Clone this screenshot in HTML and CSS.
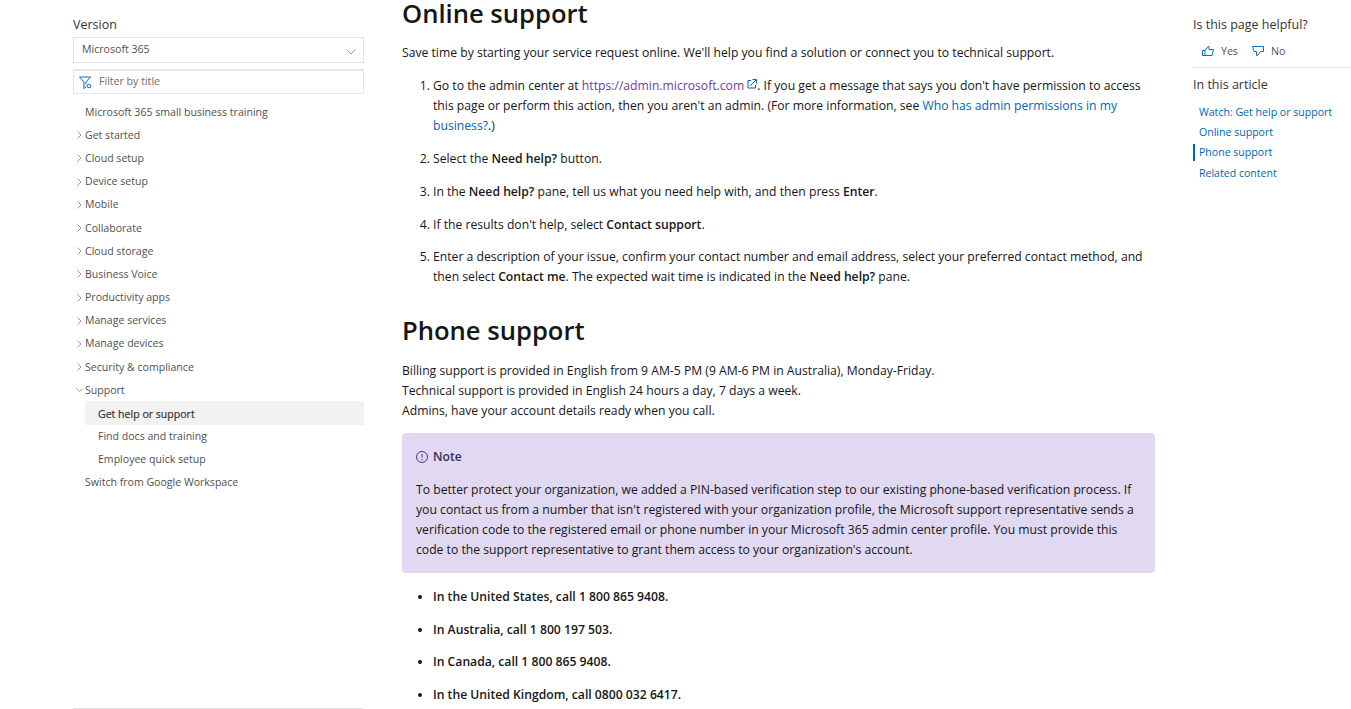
FILE: index.html
```html
<!DOCTYPE html>
<html lang="en">
<head>
<meta charset="utf-8">
<title>Get help or support</title>
<link rel="stylesheet" href="styles.css">
</head>
<body>
<div class="page">
  <aside class="sidebar">
    <div class="side-top">
      <div class="version-label">Version</div>
      <div class="version-select">
        <span>Microsoft 365</span>
        <svg class="select-chev" width="10" height="6" viewBox="0 0 10 6"><path d="M.5.5 5 5 9.500.5" fill="none" stroke="#999"/></svg>
      </div>
      <div class="filter">
        <svg class="filter-icon" width="13" height="13" viewBox="0 0 13 13" fill="none" stroke="#0f6cbd"><path d="M.5 1h11L7 6v2.500"/><path d="M.5 1 5 6v6.500l2-1.500"/><circle cx="10" cy="10" r="1.800"/></svg>
        <span>Filter by title</span>
      </div>
      <ul class="toc">
        <li class="toc-item"><span class="chev"></span>Microsoft 365 small business training</li>
        <li class="toc-item"><svg class="chev" width="5" height="8" viewBox="0 0 5 8"><path d="M.5.5 4 4 .5 7.500" fill="none" stroke="#999"/></svg>Get started</li>
        <li class="toc-item"><svg class="chev" width="5" height="8" viewBox="0 0 5 8"><path d="M.5.5 4 4 .5 7.500" fill="none" stroke="#999"/></svg>Cloud setup</li>
        <li class="toc-item"><svg class="chev" width="5" height="8" viewBox="0 0 5 8"><path d="M.5.5 4 4 .5 7.500" fill="none" stroke="#999"/></svg>Device setup</li>
        <li class="toc-item"><svg class="chev" width="5" height="8" viewBox="0 0 5 8"><path d="M.5.5 4 4 .5 7.500" fill="none" stroke="#999"/></svg>Mobile</li>
        <li class="toc-item"><svg class="chev" width="5" height="8" viewBox="0 0 5 8"><path d="M.5.5 4 4 .5 7.500" fill="none" stroke="#999"/></svg>Collaborate</li>
        <li class="toc-item"><svg class="chev" width="5" height="8" viewBox="0 0 5 8"><path d="M.5.5 4 4 .5 7.500" fill="none" stroke="#999"/></svg>Cloud storage</li>
        <li class="toc-item"><svg class="chev" width="5" height="8" viewBox="0 0 5 8"><path d="M.5.5 4 4 .5 7.500" fill="none" stroke="#999"/></svg>Business Voice</li>
        <li class="toc-item"><svg class="chev" width="5" height="8" viewBox="0 0 5 8"><path d="M.5.5 4 4 .5 7.500" fill="none" stroke="#999"/></svg>Productivity apps</li>
        <li class="toc-item"><svg class="chev" width="5" height="8" viewBox="0 0 5 8"><path d="M.5.5 4 4 .5 7.500" fill="none" stroke="#999"/></svg>Manage services</li>
        <li class="toc-item"><svg class="chev" width="5" height="8" viewBox="0 0 5 8"><path d="M.5.5 4 4 .5 7.500" fill="none" stroke="#999"/></svg>Manage devices</li>
        <li class="toc-item"><svg class="chev" width="5" height="8" viewBox="0 0 5 8"><path d="M.5.5 4 4 .5 7.500" fill="none" stroke="#999"/></svg>Security &amp; compliance</li>
        <li class="toc-item"><svg class="chev chev-open" width="7" height="4" viewBox="0 0 7 4"><path d="M.5.5 3.500 3.500 6.500.5" fill="none" stroke="#999"/></svg>Support</li>
        <li class="toc-sub toc-active">Get help or support</li>
        <li class="toc-sub">Find docs and training</li>
        <li class="toc-sub">Employee quick setup</li>
        <li class="toc-item"><span class="chev"></span>Switch from Google Workspace</li>
      </ul>
    </div>
    <div class="side-rule"></div>
  </aside>

  <main class="content">
    <h2 class="heading">Online support</h2>
    <p>Save time by starting your service request online. We'll help you find a solution or connect you to technical support.</p>
    <ol class="steps">
      <li>Go to the admin center at <a class="visited" href="#">https://admin.microsoft.com<svg class="ext" width="10" height="10" viewBox="0 0 10 10" fill="none" stroke="#0065b3"><path d="M4 1.500H1v7.500h7.500V6"/><path d="M3.500 6.500 9 1M5.500.5h4v4"/></svg></a>. If you get a message that says you don't have permission to access this page or perform this action, then you aren't an admin. (For more information, see <a href="#">Who has admin permissions in my business?</a>.)</li>
      <li>Select the <b>Need help?</b> button.</li>
      <li>In the <b>Need help?</b> pane, tell us what you need help with, and then press <b>Enter</b>.</li>
      <li>If the results don't help, select <b>Contact support</b>.</li>
      <li>Enter a description of your issue, confirm your contact number and email address, select your preferred contact method, and then select <b>Contact me</b>. The expected wait time is indicated in the <b>Need help?</b> pane.</li>
    </ol>
    <h2 class="heading heading-next">Phone support</h2>
    <p class="billing">Billing support is provided in English from 9 AM-5 PM (9 AM-6 PM in Australia), Monday-Friday.<br>Technical support is provided in English 24 hours a day, 7 days a week.<br>Admins, have your account details ready when you call.</p>
    <div class="note">
      <div class="note-title">
        <svg class="note-icon" width="12" height="12" viewBox="0 0 12 12" fill="none" stroke="#5c2e91"><circle cx="6" cy="6" r="5.500"/><path d="M6 3v3.500M6 8v1.200"/></svg>
        <span>Note</span>
      </div>
      <p class="note-body">To better protect your organization, we added a PIN-based verification step to our existing phone-based verification process. If you contact us from a number that isn't registered with your organization profile, the Microsoft support representative sends a verification code to the registered email or phone number in your Microsoft 365 admin center profile. You must provide this code to the support representative to grant them access to your organization's account.</p>
    </div>
    <ul class="phones">
      <li><b>In the United States, call 1 800 865 9408.</b></li>
      <li><b>In Australia, call 1 800 197 503.</b></li>
      <li><b>In Canada, call 1 800 865 9408.</b></li>
      <li><b>In the United Kingdom, call 0800 032 6417.</b></li>
    </ul>
  </main>

  <aside class="rail">
    <div class="rail-title">Is this page helpful?</div>
    <div class="votes">
      <span class="vote"><svg width="12" height="12" viewBox="0 0 12 12" fill="none" stroke="#0f6cbd"><path d="M.5 5.500h2.500v5H.5zM3 5.500 6 1.500h1v3h4.500l-1.500 6H3"/></svg>Yes</span>
      <span class="vote"><svg width="12" height="12" viewBox="0 0 12 12" fill="none" stroke="#0f6cbd"><path d="M.5 1.500h11v5H8.500l-3 4h-1v-4H2z"/></svg>No</span>
    </div>
    <div class="rail-rule"></div>
    <div class="rail-title rail-article">In this article</div>
    <ul class="article-links">
      <li>Watch: Get help or support</li>
      <li>Online support</li>
      <li class="article-active">Phone support</li>
      <li>Related content</li>
    </ul>
  </aside>
</div>
</body>
</html>
```

FILE: styles.css
```css
* { box-sizing: border-box; }
html, body { margin: 0; height: 100%; overflow: hidden; background: #fff; }
body { font-family: "Open Sans", "Noto Sans", sans-serif; color: #161616; font-size: 12.18px; }
.page { display: grid; grid-template-columns: 291px 753px 158px; column-gap: 38px; padding-left: 73px; height: 709px; overflow: hidden; }

.sidebar { display: flex; flex-direction: column; justify-content: space-between; height: 709px; padding-top: 16px; }
.version-label { font-size: 12.5px; line-height: 18px; color: #333; margin-bottom: 3px; }
.version-select { height: 26px; border: 1px solid #e3e3e3; padding: 0 7px 3px 8px; display: flex; align-items: center; justify-content: space-between; font-size: 10.6px; color: #505050; }
.select-chev { margin-top: 6px; }
.filter { margin-top: 6px; height: 25px; border: 1px solid #e6e6e6; border-top-width: 2px; padding: 0 8px 2px 5px; display: flex; align-items: center; gap: 7px; font-size: 10.6px; color: #6e6e6e; }
.filter-icon { flex: none; margin-top: 2px; }
.toc { list-style: none; margin: 6.500px 0 0; padding: 0; font-size: 10.570px; color: #505050; }
.toc-item { height: 23.200px; line-height: 23px; display: flex; align-items: center; }
.chev { width: 12px; flex: none; }
svg.chev { width: 5px; margin-left: 3.500px; margin-right: 3.500px; }
svg.chev-open { width: 7px; margin-left: 3px; margin-right: 2px; }
.toc-sub { height: 23px; line-height: 23px; margin-left: 12px; padding-left: 13px; }
.toc-active { background: #f2f2f2; color: #333; height: 24px; margin-top: -1px; padding-top: 2px; -webkit-text-stroke: .2px #333; }
.side-rule { height: 1px; background: #e3e3e3; width: 290px; }

.content { font-size: 12.18px; line-height: 20px; margin-top: -4px; }
.heading { margin: 0 0 11px; font-size: 25.600px; line-height: 36px; font-weight: 600; color: #161616; }
.heading-next { margin: 25.400px 0 12px; }
.content p { margin: 0; }
.steps { margin: 13.200px 0 0; padding: 0 0 0 31px; }
.steps li { margin-bottom: 12.800px; }
.steps li:last-child { margin-bottom: 0; }
.content a { color: #0065b3; text-decoration: none; }
.content a.visited { color: #6b3fa0; }
.ext { margin-left: 3px; vertical-align: 1px; }
b { font-weight: 600; }
.note { margin-top: 12px; height: 140px; padding: 14px 14px 13px; background: #e1d9f1; border-radius: 4px; }
.note-title { display: flex; align-items: center; gap: 5px; font-weight: 600; color: #3b2e58; margin-bottom: 13px; }
.note-icon { flex: none; }
.phones { margin: 14.100px 0 0; padding: 0 0 0 31px; }
.phones li { margin-bottom: 12.700px; }

.rail { padding-top: 16px; }
.rail-title { font-size: 12.5px; line-height: 18px; color: #333; font-weight: 500; }
.votes { display: flex; gap: 14px; padding: 9px 0 0 9px; font-size: 10.6px; color: #505050; line-height: 16px; }
.vote { display: flex; align-items: center; gap: 7px; }
.rail-rule { height: 1px; background: #e3e3e3; margin-top: 8px; }
.rail-article { margin-top: 8px; }
.article-links { list-style: none; margin: 8px 0 0; padding: 0; font-size: 10.570px; color: #0065b3; }
.article-links li { height: 20.400px; line-height: 20px; padding-left: 6px; }
.article-links .article-active { border-left: 2px solid #0065b3; padding-left: 4px; height: 17px; line-height: 16px; margin: 1px 0 2.500px; }
```
